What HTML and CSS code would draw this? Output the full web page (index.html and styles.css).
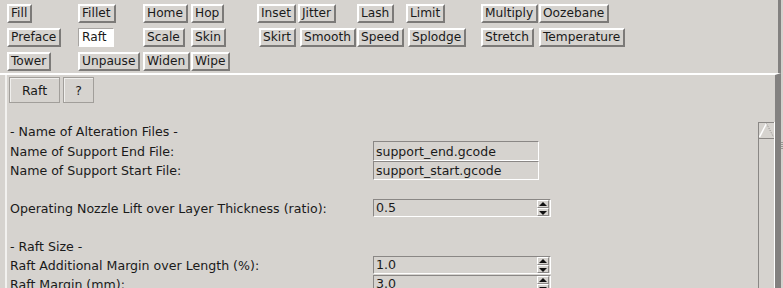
FILE: index.html
```html
<!DOCTYPE html>
<html lang="en">
<head>
    <meta charset="UTF-8">
    <title>Skeinforge - Raft</title>
    <link rel="stylesheet" href="styles.css">
</head>
<body>
    <div class="toolbar">
        <button class="tool">Fill</button>
        <button class="tool">Fillet</button>
        <button class="tool">Home</button>
        <button class="tool">Hop</button>
        <button class="tool">Inset</button>
        <button class="tool">Jitter</button>
        <button class="tool">Lash</button>
        <button class="tool">Limit</button>
        <button class="tool">Multiply</button>
        <button class="tool">Oozebane</button>

        <button class="tool">Preface</button>
        <button class="tool selected">Raft</button>
        <button class="tool">Scale</button>
        <button class="tool">Skin</button>
        <button class="tool nudge">Skirt</button>
        <button class="tool nudge">Smooth</button>
        <button class="tool">Speed</button>
        <button class="tool nudge">Splodge</button>
        <button class="tool">Stretch</button>
        <button class="tool">Temperature</button>

        <button class="tool">Tower</button>
        <button class="tool">Unpause</button>
        <button class="tool">Widen</button>
        <button class="tool">Wipe</button>
    </div>

    <div class="lower">
        <div class="pane">
            <div class="tabs">
                <button class="tab tab-raft">Raft</button>
                <button class="tab tab-help">?</button>
            </div>

            <div class="settings">
                <div class="form">
                    <div class="row">- Name of Alteration Files -</div>
                    <div class="row row-tall">
                        <span>Name of Support End File:</span>
                        <input class="entry" type="text" value="support_end.gcode">
                    </div>
                    <div class="row">
                        <span>Name of Support Start File:</span>
                        <input class="entry" type="text" value="support_start.gcode">
                    </div>
                    <div class="row"></div>
                    <div class="row">
                        <span>Operating Nozzle Lift over Layer Thickness (ratio):</span>
                        <div class="spin"><span class="spin-value">0.5</span><span class="spin-arrows"><i class="up"></i><i class="down"></i></span></div>
                    </div>
                    <div class="row"></div>
                    <div class="row">- Raft Size -</div>
                    <div class="row">
                        <span>Raft Additional Margin over Length (%):</span>
                        <div class="spin"><span class="spin-value">1.0</span><span class="spin-arrows"><i class="up"></i><i class="down"></i></span></div>
                    </div>
                    <div class="row">
                        <span>Raft Margin (mm):</span>
                        <div class="spin"><span class="spin-value">3.0</span><span class="spin-arrows"><i class="up"></i><i class="down"></i></span></div>
                    </div>
                </div>

                <div class="scrollbar">
                    <div class="scroll-up">
                        <svg width="15" height="15" viewBox="0 0 15 15">
                            <line x1="0.5" y1="14" x2="7.5" y2="0.5" stroke="#ffffff" stroke-width="1.5"/>
                            <line x1="7.5" y1="0.5" x2="14.5" y2="14" stroke="#8a8785" stroke-width="1" stroke-dasharray="1 1.5"/>
                        </svg>
                    </div>
                </div>
            </div>
        </div>
        <div class="grip"></div>
    </div>
</body>
</html>
```

FILE: styles.css
```css
body {
    margin: 0;
    width: 783px;
    height: 288px;
    overflow: hidden;
    background-color: #d6d3cf;
    color: #1a1a1a;
    font-family: 'DejaVu Sans', sans-serif;
    font-size: 12px;
}

/* barra de herramientas de arriba */
.toolbar {
    box-sizing: border-box;
    width: 781px;
    height: 73px;
    padding: 4px 0 0 7px;
    border-right: 3px solid #838180;
    display: grid;
    grid-template-columns: 71px 65px 48px 66px 41px 59px 49px 75px 58px auto;
    grid-auto-rows: 19px;
    row-gap: 5px;
    justify-items: start;
}

.tool {
    height: 19px;
    margin: 0;
    padding: 0 3px 0 2px;
    font-family: inherit;
    font-size: 12.2px;
    line-height: 15px;
    color: #1a1a1a;
    background-color: #d6d3cf;
    border: 2px solid;
    border-color: #ffffff #7c7a78 #7c7a78 #ffffff;
}

.tool.nudge {
    margin-left: 2px;
}

.tool.selected {
    background-color: #ffffff;
    border-color: #a8a5a2 #ffffff #ffffff #a8a5a2;
    border-width: 1px;
    padding: 0 6px 0 3px;
}

/* parte de abajo */
.lower {
    position: relative;
    box-sizing: border-box;
    width: 781px;
    height: 215px;
    border-top: 2px solid #ffffff;
    border-right: 6px solid #838180;
}

.pane {
    height: 100%;
    margin-left: 5px;
    border-left: 2px solid #f2f1ef;
}

.grip {
    position: absolute;
    right: -8px;
    top: 67px;
    width: 2px;
    height: 7px;
    background: repeating-linear-gradient(#9a9794 0 1px, transparent 1px 2px);
}

.tabs {
    display: flex;
    gap: 3px;
    padding: 2px 0 0 2px;
    height: 26px;
}

.tab {
    height: 26px;
    margin: 0;
    padding: 0;
    font-family: inherit;
    font-size: 12.5px;
    color: #1a1a1a;
    background-color: #d6d3cf;
    border: 1px solid #a19e9a;
    box-shadow: inset 1px 1px 0 #f0efed;
}

.tab-raft {
    width: 51px;
}

.tab-help {
    width: 31px;
}

.settings {
    display: flex;
    margin-top: 19px;
}

.form {
    flex: 1;
    padding-left: 3px;
    font-size: 12.6px;
}

.row {
    height: 19px;
    display: grid;
    grid-template-columns: 363px auto;
    align-items: center;
    white-space: nowrap;
}

.row-tall {
    height: 20px;
}

.entry {
    box-sizing: border-box;
    width: 166px;
    height: 100%;
    margin: 0;
    padding: 0 2px;
    font-family: inherit;
    font-size: 12.5px;
    color: #1a1a1a;
    background-color: #d6d3cf;
    border: 1px solid;
    border-color: #8a8785 #ffffff #ffffff #8a8785;
    outline: none;
}

.spin {
    box-sizing: border-box;
    width: 178px;
    height: 18px;
    align-self: start;
    display: flex;
    justify-content: space-between;
    border: 1px solid;
    border-color: #8a8785 #ffffff #ffffff #8a8785;
}

.spin-value {
    padding-left: 2px;
    line-height: 16px;
}

.spin-arrows {
    width: 12px;
    margin-right: 1px;
    display: flex;
    flex-direction: column;
}

.spin-arrows i {
    flex: 1;
    position: relative;
    border: 1px solid;
    border-color: #ffffff #8a8785 #8a8785 #ffffff;
}

.spin-arrows i::after {
    content: "";
    position: absolute;
    left: 1px;
    width: 0;
    height: 0;
    border-left: 4px solid transparent;
    border-right: 4px solid transparent;
}

.spin-arrows .up::after {
    top: 1px;
    border-bottom: 4px solid #111111;
}

.spin-arrows .down::after {
    top: 2px;
    border-top: 4px solid #111111;
}

/* barra de desplazamiento */
.scrollbar {
    box-sizing: border-box;
    width: 17px;
    height: 200px;
    border-left: 1px solid #8a8785;
    border-right: 1px solid #ffffff;
}

.scroll-up {
    height: 15px;
    border-top: 1px solid #8a8785;
    border-bottom: 1px solid #8a8785;
}

.scroll-up svg {
    display: block;
}
```
